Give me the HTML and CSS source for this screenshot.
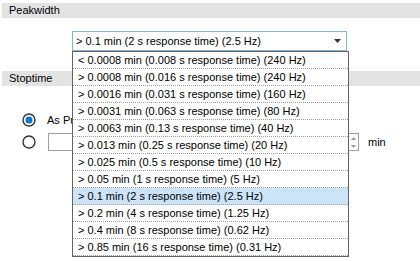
FILE: index.html
```html
<!DOCTYPE html>
<html lang="en">
<head>
    <meta charset="UTF-8">
    <title>Detector Settings</title>
    <link rel="stylesheet" href="styles.css">
</head>
<body>
    <div class="panel">
        <!-- Peakwidth group -->
        <div class="group-title">Peakwidth</div>
        <div class="combo-row">
            <div class="combo">
                <span class="combo-value">&gt; 0.1 min (2 s response time) (2.5 Hz)</span>
                <svg class="combo-arrow" width="7" height="4" viewBox="0 0 7 4"><path d="M0 0H7L3.5 4Z" fill="#333"/></svg>

                <!-- open dropdown -->
                <ul class="combo-list">
                    <li>&lt; 0.0008 min (0.008 s response time) (240 Hz)</li>
                    <li>&gt; 0.0008 min (0.016 s response time) (240 Hz)</li>
                    <li>&gt; 0.0016 min (0.031 s response time) (160 Hz)</li>
                    <li>&gt; 0.0031 min (0.063 s response time) (80 Hz)</li>
                    <li>&gt; 0.0063 min (0.13 s response time) (40 Hz)</li>
                    <li>&gt; 0.013 min (0.25 s response time) (20 Hz)</li>
                    <li>&gt; 0.025 min (0.5 s response time) (10 Hz)</li>
                    <li>&gt; 0.05 min (1 s response time) (5 Hz)</li>
                    <li class="selected">&gt; 0.1 min (2 s response time) (2.5 Hz)</li>
                    <li>&gt; 0.2 min (4 s response time) (1.25 Hz)</li>
                    <li>&gt; 0.4 min (8 s response time) (0.62 Hz)</li>
                    <li>&gt; 0.85 min (16 s response time) (0.31 Hz)</li>
                </ul>
            </div>
        </div>

        <!-- Stoptime group -->
        <div class="group-title stoptime">Stoptime</div>
        <div class="radio-row first">
            <svg class="radio" width="14" height="14" viewBox="0 0 14 14"><circle cx="7" cy="7" r="6" fill="#fff" stroke="#333" stroke-width="1.4"/><circle cx="7" cy="7" r="3.5" fill="#0078d7"/></svg>
            <span class="radio-label">As Pump/Injector</span>
        </div>
        <div class="radio-row">
            <svg class="radio" width="14" height="14" viewBox="0 0 14 14"><circle cx="7" cy="7" r="6" fill="#fff" stroke="#333" stroke-width="1.4"/></svg>
            <div class="spin">
                <span class="spin-input"></span>
                <span class="spin-buttons">
                    <svg width="5" height="3" viewBox="0 0 5 3"><path d="M0 3H5L2.5 0Z" fill="#999"/></svg>
                    <svg width="5" height="3" viewBox="0 0 5 3"><path d="M0 0H5L2.5 3Z" fill="#999"/></svg>
                </span>
            </div>
            <span class="unit">min</span>
        </div>
    </div>
</body>
</html>
```

FILE: styles.css
```css
html, body {
    height: 100%;
}

body {
    margin: 0;
    background-color: #ffffff;
    color: #000000;
    font-family: "Liberation Sans", Arial, sans-serif;
    font-size: 11px;
}

.panel {
    box-sizing: border-box;
    min-height: 100%;
    padding-top: 3px;
}

/* Group header bars */
.group-title {
    margin-left: 2px;
    height: 15px;
    line-height: 15px;
    padding-left: 7px;
    background-color: #e3e3e3;
}

.stoptime {
    margin-top: 20px;
}

/* Combobox */
.combo-row {
    padding: 13px 0 0 72px;
}

.combo {
    position: relative;
    box-sizing: border-box;
    width: 275px;
    height: 20px;
    border: 1px solid #7eb4ea;
    display: flex;
    align-items: center;
    padding: 0 5px 0 3px;
    z-index: 10;
}

.combo-value {
    flex: 1;
}

.combo-list {
    position: absolute;
    top: 19px;
    left: -1px;
    box-sizing: border-box;
    width: 277px;
    margin: 0;
    padding: 0;
    list-style: none;
    background-color: #ffffff;
    border: 1px solid #646464;
}

.combo-list li {
    height: 16px;
    line-height: 16px;
    padding-left: 5px;
    border-bottom: 1px dotted #a0a0a0;
    white-space: nowrap;
}

.combo-list li.selected {
    background-color: #cce4f7;
}

/* Radio rows */
.radio-row {
    display: flex;
    align-items: center;
    padding-left: 22px;
    gap: 11px;
    margin-top: 3px;
}

.radio-row.first {
    margin-top: 24px;
    height: 20px;
}

.radio {
    flex: none;
}

.spin {
    box-sizing: border-box;
    width: 311px;
    height: 18px;
    margin-left: 1px;
    border: 1px solid #a0a0a0;
    display: flex;
}

.spin-input {
    flex: 1;
}

.spin-buttons {
    width: 10px;
    display: flex;
    flex-direction: column;
    justify-content: space-around;
    align-items: center;
}

.spin-buttons svg {
    display: block;
}

.unit {
    margin-left: -2px;
}
```
